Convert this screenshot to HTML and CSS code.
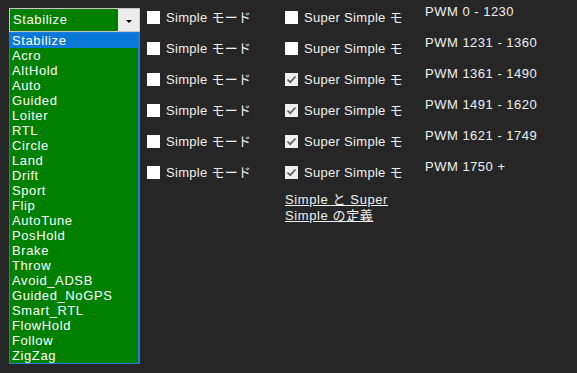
FILE: index.html
```html
<!DOCTYPE html>
<html>
  <head>
    <meta charset="UTF-8" />
    <title>Flight Modes</title>
    <link rel="stylesheet" href="styles.css">
  </head>

  <body>
    <div class="page">
      <div class="modes">
        <div class="combo">
          <span class="combo-text">Stabilize</span>
          <span class="combo-button"><span class="arrow"></span></span>
        </div>
        <ul class="droplist">
          <li class="selected">Stabilize</li>
          <li>Acro</li>
          <li>AltHold</li>
          <li>Auto</li>
          <li>Guided</li>
          <li>Loiter</li>
          <li>RTL</li>
          <li>Circle</li>
          <li>Land</li>
          <li>Drift</li>
          <li>Sport</li>
          <li>Flip</li>
          <li>AutoTune</li>
          <li>PosHold</li>
          <li>Brake</li>
          <li>Throw</li>
          <li>Avoid_ADSB</li>
          <li>Guided_NoGPS</li>
          <li>Smart_RTL</li>
          <li>FlowHold</li>
          <li>Follow</li>
          <li>ZigZag</li>
        </ul>
      </div>

      <div class="checks simple">
        <label class="check"><span class="box"></span><span class="text">Simple モード</span></label>
        <label class="check"><span class="box"></span><span class="text">Simple モード</span></label>
        <label class="check"><span class="box"></span><span class="text">Simple モード</span></label>
        <label class="check"><span class="box"></span><span class="text">Simple モード</span></label>
        <label class="check"><span class="box"></span><span class="text">Simple モード</span></label>
        <label class="check"><span class="box"></span><span class="text">Simple モード</span></label>
      </div>

      <div class="checks super">
        <label class="check"><span class="box"></span><span class="text">Super Simple モ</span></label>
        <label class="check"><span class="box"></span><span class="text">Super Simple モ</span></label>
        <label class="check"><span class="box checked"><svg width="13" height="13" viewBox="0 0 13 13"><path d="M2.5 6.5 L5.2 9.2 L10.5 3.5" fill="none" stroke="#5f5f5f" stroke-width="1.7"/></svg></span><span class="text">Super Simple モ</span></label>
        <label class="check"><span class="box checked"><svg width="13" height="13" viewBox="0 0 13 13"><path d="M2.5 6.5 L5.2 9.2 L10.5 3.5" fill="none" stroke="#5f5f5f" stroke-width="1.7"/></svg></span><span class="text">Super Simple モ</span></label>
        <label class="check"><span class="box checked"><svg width="13" height="13" viewBox="0 0 13 13"><path d="M2.5 6.5 L5.2 9.2 L10.5 3.5" fill="none" stroke="#5f5f5f" stroke-width="1.7"/></svg></span><span class="text">Super Simple モ</span></label>
        <label class="check"><span class="box checked"><svg width="13" height="13" viewBox="0 0 13 13"><path d="M2.5 6.5 L5.2 9.2 L10.5 3.5" fill="none" stroke="#5f5f5f" stroke-width="1.7"/></svg></span><span class="text">Super Simple モ</span></label>
        <a class="help" href="#">Simple と Super<br>Simple の定義</a>
      </div>

      <div class="pwm">
        <div class="pwm-row">PWM 0 - 1230</div>
        <div class="pwm-row">PWM 1231 - 1360</div>
        <div class="pwm-row">PWM 1361 - 1490</div>
        <div class="pwm-row">PWM 1491 - 1620</div>
        <div class="pwm-row">PWM 1621 - 1749</div>
        <div class="pwm-row">PWM 1750 +</div>
      </div>
    </div>
  </body>
</html>
```

FILE: styles.css
```css
html,
body {
  margin: 0;
  height: 100%;
}

body {
  background: #262626;
  color: #f0f0f0;
  font: 13px "Liberation Sans", "Noto Sans CJK JP", sans-serif;
  letter-spacing: 0.3px;
}

.page {
  display: flex;
  align-items: flex-start;
  padding-left: 9px;
}

/* combo box with its open list */
.modes {
  width: 131px;
  padding-top: 8px;
}

.combo {
  display: flex;
  height: 24px;
  box-sizing: border-box;
  border: 1px solid #c8c8c8;
  background: #008000;
}

.combo-text {
  flex: 1;
  padding-left: 3px;
  line-height: 22px;
  color: #fff;
  letter-spacing: 0.6px;
}

.combo-button {
  width: 21px;
  background: #ececec;
  display: flex;
  align-items: center;
  justify-content: center;
}

.arrow {
  width: 0;
  height: 0;
  border-left: 3px solid transparent;
  border-right: 3px solid transparent;
  border-top: 3px solid #000;
  margin-top: 2px;
}

.droplist {
  list-style: none;
  margin: 0;
  padding: 0;
  border: 1px solid #1e7be0;
  border-right-width: 2px;
  background: #008000;
}

.droplist li {
  height: 15px;
  line-height: 15px;
  padding-left: 2px;
  color: #fff;
  letter-spacing: 0.6px;
}

.droplist li.selected {
  background: #0a78d8;
}

/* check box columns */
.checks {
  display: flex;
  flex-direction: column;
  padding-top: 1px;
}

.simple {
  margin-left: 7px;
  width: 138px;
}

.super {
  width: 140px;
}

.check {
  display: flex;
  align-items: center;
  height: 31px;
}

.box {
  width: 13px;
  height: 13px;
  margin-top: 2px;
  background: #fff;
  flex: none;
}

.box.checked {
  background: #efefef;
}

.box svg {
  display: block;
}

.text {
  margin-left: 6px;
  white-space: nowrap;
}

.help {
  margin-top: 5px;
  line-height: 16px;
  color: #f0f0f0;
  text-decoration: underline;
  letter-spacing: 0.6px;
}

/* PWM ranges */
.pwm {
  display: flex;
  flex-direction: column;
  gap: 7px;
}

.pwm-row {
  height: 24px;
  line-height: 24px;
  letter-spacing: 0.5px;
}
```
